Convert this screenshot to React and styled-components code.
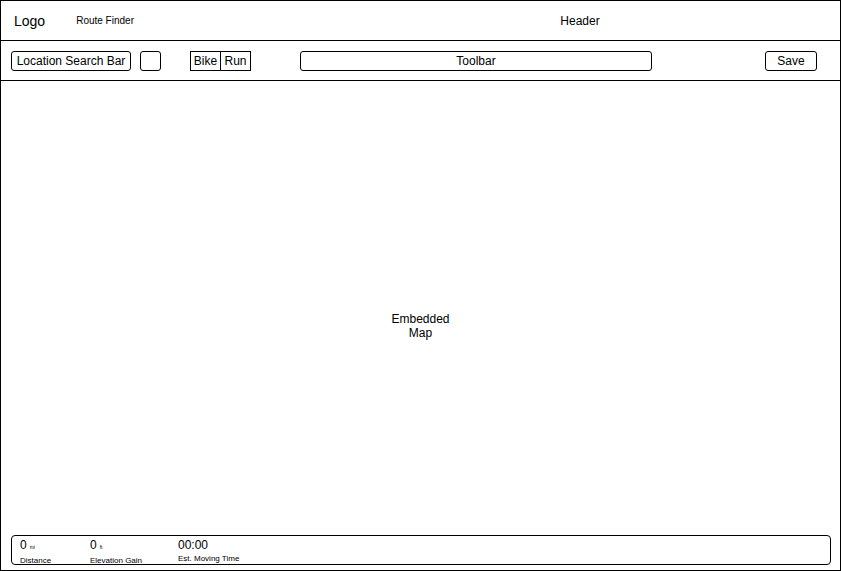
import React from 'react';
import styled, { createGlobalStyle } from 'styled-components';

const GlobalStyle = createGlobalStyle`
   html, body {
      margin: 0;
      padding: 0;
      background: #ffffff;
   }

   body {
      font-family: "Liberation Sans", Arial, Helvetica, sans-serif;
      color: #000000;
   }
`;

const Frame = styled.div`
   display: flex;
   flex-direction: column;
   box-sizing: border-box;
   width: 841px;
   height: 571px;
   border: 1px solid #000;
`;

const HeaderBar = styled.header`
   display: flex;
   align-items: center;
   box-sizing: border-box;
   height: 40px;
   border-bottom: 1px solid #000;
`;

const Brand = styled.div`
   display: flex;
   align-items: center;
   width: 319px;
   padding-left: 13px;
   gap: 31px;
   box-sizing: border-box;
`;

const Logo = styled.span`
   font-size: 14px;
`;

const AppName = styled.span`
   font-size: 10px;
`;

const HeaderTitle = styled.div`
   flex: 1;
   text-align: center;
   font-size: 12px;
`;

const ToolbarRow = styled.nav`
   display: flex;
   align-items: center;
   box-sizing: border-box;
   height: 40px;
   padding-left: 10px;
   border-bottom: 1px solid #000;
`;

const Button = styled.div`
   display: flex;
   align-items: center;
   justify-content: center;
   box-sizing: border-box;
   width: ${(props) => props.$width}px;
   height: 20px;
   margin-left: ${(props) => props.$gap || 0}px;
   border: 1px solid #000;
   border-radius: 3px;
   font-size: 12px;
`;

const Toggle = styled.div`
   display: flex;
   box-sizing: border-box;
   height: 20px;
   margin-left: ${(props) => props.$gap}px;
   border: 1px solid #000;
`;

const ToggleOption = styled.div`
   display: flex;
   align-items: center;
   justify-content: center;
   width: 29px;
   font-size: 12px;

   & + & {
      border-left: 1px solid #000;
   }
`;

const Map = styled.main`
   position: relative;
   flex: 1;
   display: flex;
   align-items: center;
   justify-content: center;
`;

const MapLabel = styled.div`
   font-size: 12px;
   line-height: 14px;
   text-align: center;
   width: 70px;
`;

const StatsBar = styled.div`
   position: absolute;
   left: 10px;
   right: 9px;
   bottom: 5px;
   display: flex;
   box-sizing: border-box;
   height: 30px;
   padding: 2px 0 0 8px;
   border: 1px solid #000;
   border-radius: 4px;
`;

const Stat = styled.div`
   display: flex;
   flex-direction: column;
   width: ${(props) => props.$width}px;
`;

const StatValue = styled.div`
   font-size: 12px;
   line-height: 14px;
`;

const Unit = styled.span`
   font-size: 5px;
   margin-left: 3px;
`;

const StatLabel = styled.div`
   font-size: 8px;
   line-height: 10px;
   margin-top: 2px;
`;

const stats = [
   { value: '0', unit: 'mi', label: 'Distance', width: 70 },
   { value: '0', unit: 'ft', label: 'Elevation Gain', width: 88 },
   { value: '00:00', label: 'Est. Moving Time', width: 100 },
];

export default function App() {
   return (
      <>
         <GlobalStyle />
         <Frame>
            <HeaderBar>
               <Brand>
                  <Logo>Logo</Logo>
                  <AppName>Route Finder</AppName>
               </Brand>
               <HeaderTitle>Header</HeaderTitle>
            </HeaderBar>
            <ToolbarRow>
               <Button $width={120}>Location Search Bar</Button>
               <Button $width={21} $gap={9} />
               <Toggle $gap={29}>
                  <ToggleOption>Bike</ToggleOption>
                  <ToggleOption>Run</ToggleOption>
               </Toggle>
               <Button $width={352} $gap={49}>Toolbar</Button>
               <Button $width={52} $gap={113}>Save</Button>
            </ToolbarRow>
            <Map>
               <MapLabel>Embedded Map</MapLabel>
               <StatsBar>
                  {stats.map((s) => (
                     <Stat key={s.label} $width={s.width}>
                        <StatValue>
                           {s.value}
                           {s.unit && <Unit>{s.unit}</Unit>}
                        </StatValue>
                        <StatLabel>{s.label}</StatLabel>
                     </Stat>
                  ))}
               </StatsBar>
            </Map>
         </Frame>
      </>
   );
}
